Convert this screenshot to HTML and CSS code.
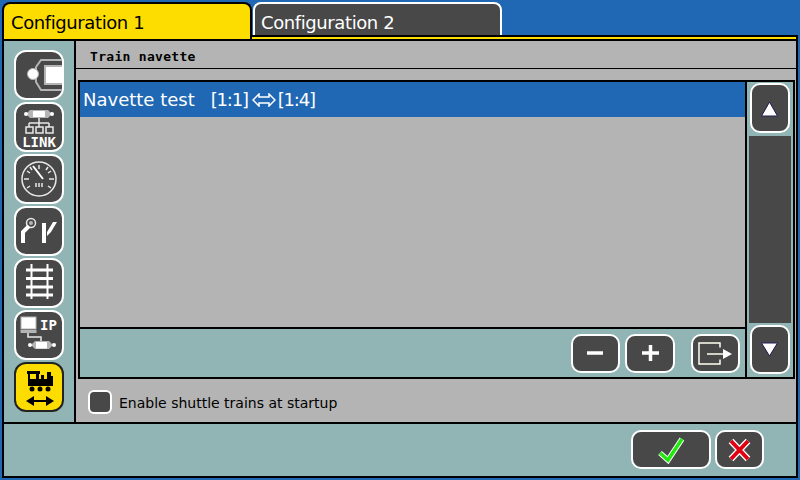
FILE: index.html
```html
<!DOCTYPE html>
<html lang="en">
<head>
<meta charset="utf-8">
<title>Train navette</title>
<link rel="stylesheet" href="styles.css">
</head>
<body>
<div class="screen">
  <div class="tabs">
    <div class="tab tab-active">Configuration 1</div>
    <div class="tab">Configuration 2</div>
  </div>
  <div class="panel">
    <div class="panel-main">
      <nav class="sidebar">
        <div class="tool"><svg viewBox="0 0 50 50"><path class="o" d="M48 10H27l-5 7v15l5 8h21"/><rect x="31" y="16" width="18" height="18" fill="#fff" stroke="#b4b4b4" stroke-width="2"/><circle cx="19" cy="24" r="5.500" fill="#fff" stroke="#b4b4b4"/></svg></div>
        <div class="tool"><svg viewBox="0 0 50 50"><path d="M12 12l4-4h18l4 4-4 4H16z" fill="#b4b4b4"/><circle cx="12" cy="12" r="2" fill="#fff"/><circle cx="38" cy="12" r="2" fill="#fff"/><rect x="19" y="9" width="12" height="6" fill="#fff"/><path class="l" d="M25 16v5M15 21h20M15 21v4M25 21v4M35 21v4"/><path class="b" d="M12 25h7v6h-7zM22 25h7v6h-7zM32 25h7v6h-7z"/><text class="t-link" x="25" y="45" text-anchor="middle">LINK</text></svg></div>
        <div class="tool"><svg viewBox="0 0 50 50"><circle cx="25" cy="25" r="17" class="l"/><path class="l" d="M25 11v4M13 17l3 2M37 17l-3 2M10 25h5M35 25h5M13 34l3-2M37 34l-3-2M34 13l-2 3M16 13l2 3"/><path d="M19 12l10 13" class="n"/><path class="l" d="M22 29v4M25 29v4M28 29v4"/></svg></div>
        <div class="tool"><svg viewBox="0 0 50 50"><circle cx="17" cy="17" r="4.500" class="l"/><circle cx="17" cy="17" r="2" fill="#b4b4b4"/><path class="track" d="M9 37V26l6-6"/><path class="track" d="M30 17v20"/><path d="M33 30v-4l6-10h4l-6 10z" fill="#fff"/></svg></div>
        <div class="tool"><svg viewBox="0 0 50 50"><path class="rail" d="M17.500 6v35M33.500 6v35"/><path class="tie" d="M12 12h27M12 20.500h27M12 29h27M12 37h27"/></svg></div>
        <div class="tool"><svg viewBox="0 0 50 50"><rect x="7" y="7" width="15" height="12" fill="#fff" stroke="#b4b4b4"/><rect x="6.500" y="20" width="16" height="3" fill="#b4b4b4"/><path class="l" d="M14 23v4h13v4"/><path d="M17 35l4-4h14l4 4-4 4H21z" fill="#b4b4b4"/><circle cx="16" cy="35" r="2" fill="#fff"/><circle cx="40" cy="35" r="2" fill="#fff"/><rect x="22" y="32" width="11" height="6.500" fill="#fff"/><text class="t-ip" x="26" y="20">IP</text></svg></div>
        <div class="tool tool-on"><svg viewBox="0 0 50 50"><path d="M13 9h13v3h-1v5h2v-4h3v4h3V10h4v4h2v10H14V12h-1z"/><rect x="16" y="12" width="6" height="5" fill="#fddc00"/><circle cx="18" cy="27" r="2.500"/><circle cx="26" cy="27" r="2.500"/><circle cx="34" cy="27" r="2.500"/><path d="M12 39l8-5v4h12v-4l8 5-8 5v-4H20v4z"/></svg></div>
      </nav>
      <main class="content">
        <div class="title">Train navette</div>
        <div class="list-area">
          <div class="list-frame">
            <div class="list-col">
              <div class="list">
                <div class="row"><span class="name">Navette test</span><span class="ref">[1:1]</span><svg class="dbl" viewBox="0 0 24 14"><path d="M7 1L1 7l6 6v-3h10v3l6-6-6-6v3H7z"/></svg><span class="ref">[1:4]</span></div>
              </div>
              <div class="actions">
                <div class="btn btn-m"><svg viewBox="0 0 49 39"><path d="M16 19h16" class="sym"/></svg></div>
                <div class="btn btn-m btn-plus"><svg viewBox="0 0 50 39"><path d="M17 19h17M25.500 11v16" class="sym"/></svg></div>
                <div class="btn btn-m btn-export"><svg viewBox="0 0 49 39"><path d="M29 13.500V9H8v21h21v-4.500" class="exp"/><path d="M16 20h17" class="exp"/><path d="M32 15l9 5-9 5z" fill="#fff"/></svg></div>
              </div>
            </div>
            <div class="scroll">
              <div class="btn btn-s"><svg viewBox="0 0 40 50"><path d="M19.500 19l8 14h-16z" class="tri"/></svg></div>
              <div class="track-bar"></div>
              <div class="btn btn-s btn-down"><svg viewBox="0 0 40 49"><path d="M11.500 18h16l-8 13z" class="tri"/></svg></div>
            </div>
          </div>
        </div>
        <label class="check"><span class="box"></span><span class="check-text">Enable shuttle trains at startup</span></label>
      </main>
    </div>
    <footer class="footer">
      <div class="btn btn-ok"><svg viewBox="0 0 80 39"><path d="M29 23l8 7L51 9" class="ok-o"/><path d="M29 23l8 7L51 9" class="ok"/></svg></div>
      <div class="btn btn-x"><svg viewBox="0 0 49 39"><path d="M16 11l17 18M33 11L16 29" class="x-o"/><path d="M16 11l17 18M33 11L16 29" class="x"/></svg></div>
    </footer>
  </div>
</div>
</body>
</html>
```
FILE: styles.css
```css
* { box-sizing: border-box; }
html, body { margin: 0; padding: 0; }
body { width: 800px; height: 480px; overflow: hidden; font-family: "DejaVu Sans", sans-serif; }
svg { display: block; width: 100%; height: 100%; }

.screen { width: 800px; height: 480px; background: #2068b4; padding: 2px; display: flex; flex-direction: column; }

.tabs { display: flex; height: 33px; gap: 1px; flex: none; position: relative; z-index: 1; }
.tab { width: 249px; background: #484848; color: #fff; font-size: 18px; letter-spacing: -0.4px; padding: 8px 0 0 6px; line-height: 22px; border: 2px solid #fff; border-bottom: none; border-radius: 8px 8px 0 0; }
.tab-active { width: 250px; height: 37px; padding-left: 7px; background: #fddc00; color: #000; border: 2px solid #000; border-bottom: none; }

.panel { flex: 1; display: flex; flex-direction: column; border: 2px solid #000; border-top: none; background: #91b4b4; min-height: 0; }
.panel-main { flex: 1; display: flex; min-height: 0; border-top: 6px solid #000; position: relative; }
.panel-main::before { content: ""; position: absolute; left: 0; right: 0; top: -4px; height: 2px; background: #fddc00; }

.sidebar { width: 72px; flex: none; background: #91b4b4; border-right: 2px solid #000; padding: 9px 0 0 10px; display: flex; flex-direction: column; gap: 2px; }
.tool { width: 50px; height: 50px; background: #484848; border: 2px solid #fff; border-radius: 12px; overflow: hidden; }
.tool svg { margin: -2px; width: 50px; height: 50px; }
.tool-on { background: #fddc00; border-color: #222; }

.o { fill: none; stroke: #b4b4b4; stroke-width: 2; }
.l { fill: none; stroke: #e8e8e8; stroke-width: 1.500; }
.b { fill: none; stroke: #e8e8e8; stroke-width: 1.500; }
.n { fill: none; stroke: #fff; stroke-width: 2; }
.track { fill: none; stroke: #fff; stroke-width: 4; }
.rail { fill: none; stroke: #fff; stroke-width: 2; }
.tie { fill: none; stroke: #fff; stroke-width: 3; }
.t-link, .t-ip { fill: #fff; font-family: "DejaVu Sans Mono", monospace; font-weight: 700; font-size: 14px; }

.content { flex: 1; min-width: 0; background: #b4b4b4; display: flex; flex-direction: column; }
.title { height: 28px; border-bottom: 1px solid #000; font-family: "DejaVu Sans Mono", monospace; font-weight: 700; font-size: 13px; letter-spacing: 0.3px; line-height: 31px; padding-left: 14px; color: #000; }
.list-area { padding: 11px 1px 0 2px; }
.list-frame { height: 299px; border: 2px solid #000; display: flex; }
.list-col { flex: 1; min-width: 0; display: flex; flex-direction: column; border-right: 2px solid #000; }
.list { height: 247px; background: #b4b4b4; border-bottom: 2px solid #000; flex: none; }
.row { height: 35px; background: #2068b4; color: #fff; font-size: 18px; line-height: 35px; padding-left: 3px; display: flex; align-items: center; white-space: nowrap; }
.name { margin-right: 16px; }
.ref { letter-spacing: -1.200px; }
.dbl { width: 24px; height: 14px; margin: 0 2px 0 4px; fill: none; stroke: #fff; stroke-width: 1.500; }
.actions { flex: 1; background: #91b4b4; display: flex; align-items: flex-start; padding: 5px 5px 0 0; justify-content: flex-end; gap: 5px; }
.btn { background: #484848; border: 2px solid #fff; border-radius: 10px; flex: none; overflow: hidden; }
.btn svg { margin: -2px; }
.btn-m { width: 49px; height: 39px; }
.btn-m svg { width: 49px; height: 39px; }
.btn-plus { width: 50px; }
.btn-plus svg { width: 50px; }
.btn-export { margin-left: 11px; }
.sym { fill: none; stroke: #fff; stroke-width: 3.500; }
.exp { fill: none; stroke: #fffff0; stroke-width: 1.500; }
.scroll { width: 46px; flex: none; background: #91b4b4; display: flex; flex-direction: column; align-items: center; padding: 1px 0 0; }
.btn-s { width: 40px; height: 50px; }
.btn-s svg { width: 40px; height: 50px; }
.btn-down { height: 49px; }
.btn-down svg { height: 49px; }
.tri { fill: #fff; stroke: #1c1c50; stroke-width: 1; }
.track-bar { width: 42px; height: 187px; background: #484848; margin: 3px 0 2px; }
.check { display: flex; align-items: center; gap: 7px; padding: 11px 0 0 12px; font-size: 14px; color: #000; }
.check-text { padding-top: 2px; }
.box { width: 24px; height: 24px; background: #484848; border: 2px solid #fff; border-radius: 6px; }

.footer { height: 54px; flex: none; border-top: 2px solid #000; background: #91b4b4; display: flex; justify-content: flex-end; padding: 6px 32px 0 0; gap: 4px; }
.btn-ok { width: 80px; height: 39px; }
.btn-ok svg { width: 80px; height: 39px; }
.btn-x { width: 49px; height: 39px; }
.btn-x svg { width: 49px; height: 39px; }
.ok { fill: none; stroke: #22e810; stroke-width: 3.500; }
.ok-o { fill: none; stroke: #fff; stroke-width: 5.500; }
.x { fill: none; stroke: #e00010; stroke-width: 4; }
.x-o { fill: none; stroke: #fff; stroke-width: 6.500; }
```
